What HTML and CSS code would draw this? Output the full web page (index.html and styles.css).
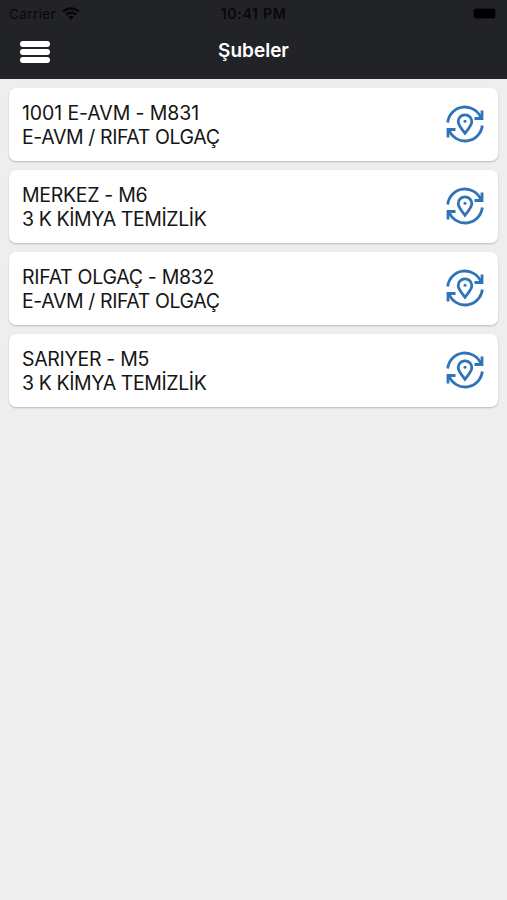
FILE: index.html
```html
<!DOCTYPE html>
<html lang="tr">
  <head>
    <meta charset="utf-8" />
    <title>Şubeler</title>
    <link rel="stylesheet" href="styles.css">
  </head>
  <body>
    <svg width="0" height="0" class="sprite">
      <symbol id="branch-icon" viewBox="0 0 40 40">
        <path d="M2.700 18.500A17.300 17.300 0 0 1 36 14M37.300 21.500A17.300 17.300 0 0 1 4 26" />
        <path d="M37 6.500v8h-7.500M3 33.500v-8h7.500" />
        <path d="M20 29.300C17 25.500 13.200 21.400 13.200 17.600a6.800 6.800 0 0 1 13.600 0C26.800 21.400 23 25.500 20 29.300Z" />
        <circle cx="20" cy="17.200" r="1.500" class="dot" />
      </symbol>
    </svg>

    <div class="header">
      <div class="statusbar">
        <div class="carrier">
          <span>Carrier</span>
          <svg class="wifi" width="18" height="14" viewBox="0 0 18 14">
            <path d="M1 4.700a11.500 11.500 0 0 1 16 0M4 7.700a7.200 7.200 0 0 1 10 0" />
            <path d="M6.200 10a4 4 0 0 1 5.600 0L9 13Z" class="wifi-dot" />
          </svg>
        </div>
        <div class="time">10:41 PM</div>
        <div class="battery"></div>
      </div>
      <div class="navbar">
        <div class="menu">
          <span></span>
          <span></span>
          <span></span>
        </div>
        <div class="title">Şubeler</div>
      </div>
    </div>

    <div class="list">
      <div class="card">
        <div class="card-text">
          <div class="branch numeric">1001 E-AVM - M831</div>
          <div class="company">E-AVM / RIFAT OLGAÇ</div>
        </div>
        <svg class="icon"><use href="#branch-icon" /></svg>
      </div>
      <div class="card">
        <div class="card-text">
          <div class="branch">MERKEZ - M6</div>
          <div class="company">3 K KİMYA TEMİZLİK</div>
        </div>
        <svg class="icon"><use href="#branch-icon" /></svg>
      </div>
      <div class="card">
        <div class="card-text">
          <div class="branch">RIFAT OLGAÇ - M832</div>
          <div class="company">E-AVM / RIFAT OLGAÇ</div>
        </div>
        <svg class="icon"><use href="#branch-icon" /></svg>
      </div>
      <div class="card">
        <div class="card-text">
          <div class="branch">SARIYER - M5</div>
          <div class="company">3 K KİMYA TEMİZLİK</div>
        </div>
        <svg class="icon"><use href="#branch-icon" /></svg>
      </div>
    </div>
  </body>
</html>
```

FILE: styles.css
```css
* {
  box-sizing: border-box;
}

body {
  margin: 0;
  min-height: 100vh;
  background-color: #eee;
  color: #151515;
  font-family: "Inter", "Liberation Sans", sans-serif;
}

.sprite {
  display: block;
}

.header {
  height: 79px;
  background-color: #222327;
}

.statusbar {
  display: grid;
  grid-template-columns: 1fr auto 1fr;
  align-items: center;
  height: 27px;
  padding: 0 12px 0 9px;
  color: #08080a;
  font-size: 13.5px;
}

.carrier {
  display: flex;
  align-items: center;
  gap: 6px;
  letter-spacing: 0.4px;
}

.wifi {
  fill: none;
  stroke: #08080a;
  stroke-width: 2.4;
}

.wifi .wifi-dot {
  fill: #08080a;
  stroke: none;
}

.time {
  padding-left: 3px;
  font-size: 14px;
  font-weight: 600;
  letter-spacing: 0.7px;
}

.battery {
  justify-self: end;
  width: 21px;
  height: 9px;
  border-radius: 2px;
  background-color: #000;
  box-shadow: 0 0 0 1px rgba(0, 0, 0, 0.35);
}

.navbar {
  display: grid;
  grid-template-columns: 1fr auto 1fr;
  align-items: center;
  height: 48px;
  padding: 0 20px;
}

.menu {
  display: flex;
  flex-direction: column;
  gap: 2px;
  width: 30px;
  padding-top: 2px;
}

.menu span {
  height: 6.3px;
  border-radius: 3px;
  background-color: #fff;
}

.title {
  padding-bottom: 2px;
  color: #fff;
  font-size: 19px;
  font-weight: 600;
}

.list {
  display: flex;
  flex-direction: column;
  gap: 9px;
  padding: 9px 9px 0;
}

.card {
  display: flex;
  align-items: center;
  justify-content: space-between;
  height: 73px;
  padding: 0 13px;
  border-radius: 7px;
  background-color: #fff;
  box-shadow: 0 1px 2px rgba(0, 0, 0, 0.22);
}

.card-text {
  padding-top: 1px;
  font-size: 19.5px;
  line-height: 24.5px;
}

.branch {
  letter-spacing: -0.3px;
}

.numeric {
  letter-spacing: -0.1px;
}

.company {
  letter-spacing: -0.4px;
}

.icon {
  width: 40px;
  height: 40px;
  margin-bottom: 2px;
  fill: none;
  stroke: #2f74b8;
  stroke-width: 2.8;
}

.dot {
  fill: #2f74b8;
  stroke: none;
}
```
